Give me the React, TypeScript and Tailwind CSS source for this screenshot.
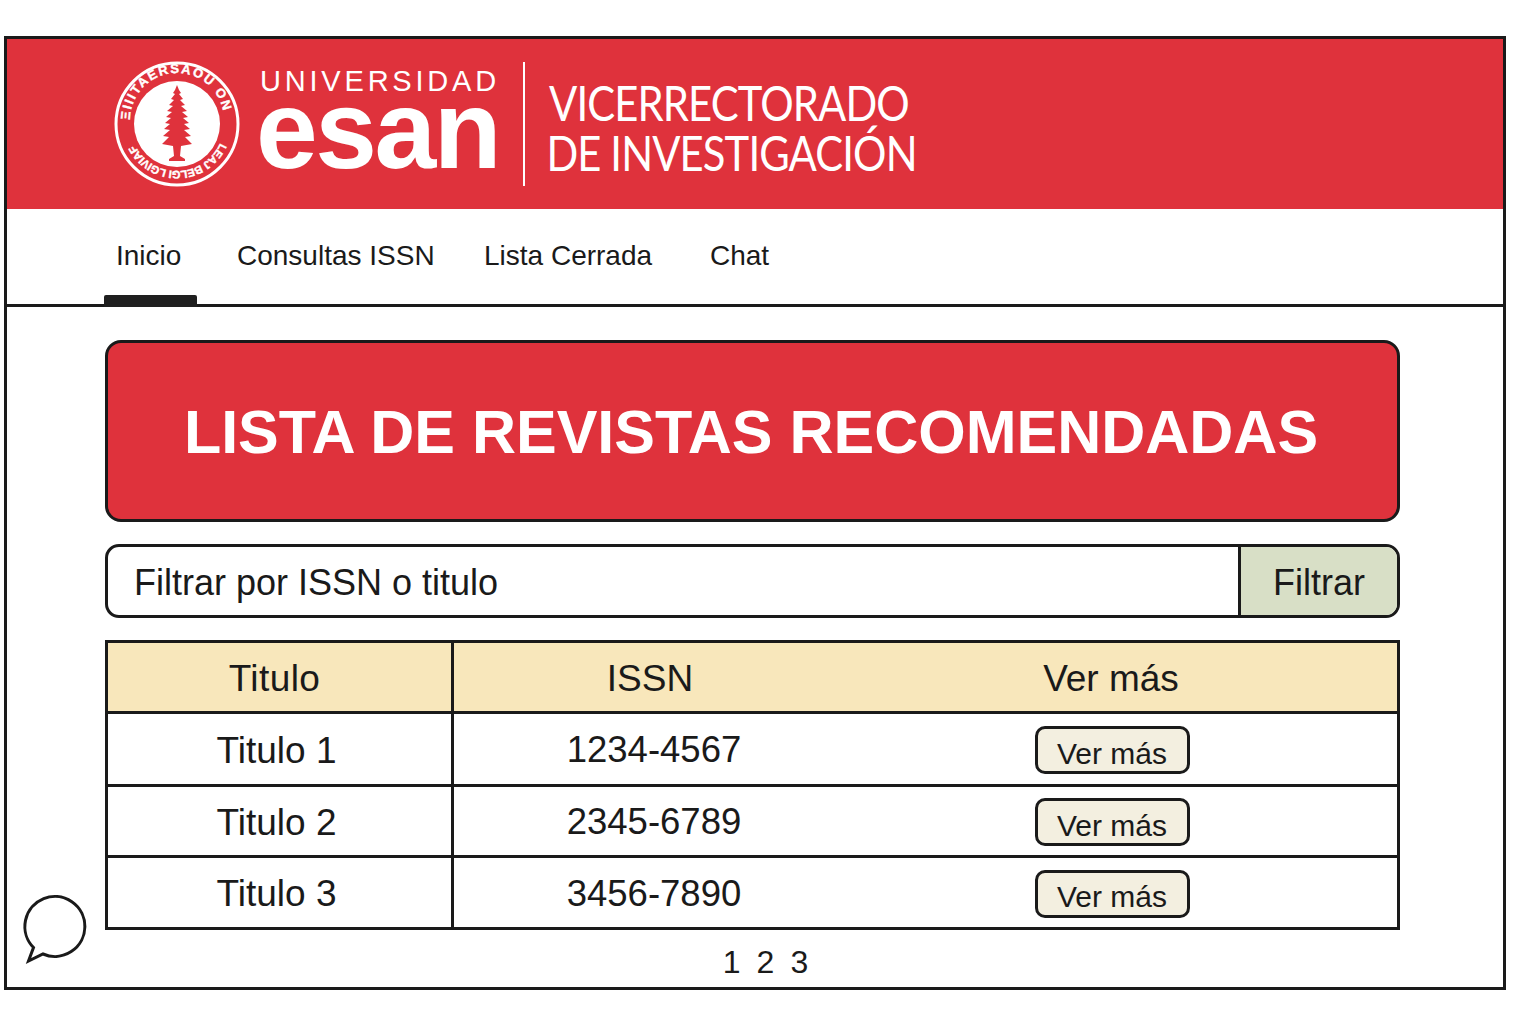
import React from 'react';

const rows = [
  { titulo: 'Titulo 1', issn: '1234-4567', height: 'h-[73px]', line: true },
  { titulo: 'Titulo 2', issn: '2345-6789', height: 'h-[71px]', line: true },
  { titulo: 'Titulo 3', issn: '3456-7890', height: 'h-[69px]', line: false },
];

const navItems = [
  { label: 'Inicio', className: 'w-[121px] pl-[12px]', active: true },
  { label: 'Consultas ISSN', className: 'w-[247px] pl-[12px]' },
  { label: 'Lista Cerrada', className: 'w-[226px] pl-[12px]' },
  { label: 'Chat', className: 'w-[100px] pl-[12px]' },
];

// half widths of the tree's tiers, top to bottom: [y at tip of branch, half width, y back at the trunk side, half width]
const tiers = [
  [33, 4, 34, 2],
  [39, 6, 40, 3],
  [45, 8, 46, 4],
  [51, 10, 52, 5],
  [57, 11, 58, 6],
  [63, 12, 64, 7],
  [69, 13, 70, 7],
  [76, 14, 77, 8],
  [84, 15, 86, 4],
];

const right = tiers.map(([y1, w1, y2, w2]) => `L${64 + w1} ${y1} L${64 + w2} ${y2}`).join(' ');
const left = [...tiers].reverse().map(([y1, w1, y2, w2]) => `L${64 - w2} ${y2} L${64 - w1} ${y1}`).join(' ');
const treePath = `M64 25 L66 30 ${right} L67 96 L72 99 L72 101 L56 101 L56 99 L61 96 ${left} L62 30 Z`;

const Seal = () => (
  <svg width="128" height="128" viewBox="0 0 128 128" className="shrink-0">
    <defs>
      <path id="sealTop" d="M 17 60 A 47 47 0 0 1 111 60" />
      <path id="sealBottom" d="M 107 83 A 47 47 0 0 1 21 83" />
    </defs>
    <circle cx="64" cy="64" r="61" fill="none" stroke="#fff" strokeWidth="3" />
    <circle cx="64" cy="64" r="43" fill="#fff" />
    <text fill="#fff" stroke="#fff" strokeWidth="0.4" fontFamily="Liberation Sans, sans-serif" fontWeight="700" fontSize="13">
      <textPath href="#sealTop" textLength="138">ΞIIITAERSAOU ON</textPath>
    </text>
    <text fill="#fff" stroke="#fff" strokeWidth="0.4" fontFamily="Liberation Sans, sans-serif" fontWeight="700" fontSize="11">
      <textPath href="#sealBottom" textLength="106">LEAJ BELGI LGIVIAF</textPath>
    </text>
    <path fill="#df323c" d={treePath} />
  </svg>
);

const ChatBubble = () => (
  <svg width="72" height="74" viewBox="0 0 72 74" className="absolute left-[12px] top-[853px]" fill="none">
    <path
      d="M14.5 55.5 A30 30 0 1 1 24 62 L9.5 69 Z"
      stroke="#1a1a1a"
      strokeWidth="3"
    />
  </svg>
);

export default function App() {
  return (
    <div className="w-[1536px] h-[1024px] bg-white pt-[36px] pl-[4px] font-['Liberation_Sans',Arial,sans-serif] text-[#1a1a1a] overflow-hidden">
      <div className="relative w-[1502px] h-[954px] border-[3px] border-[#1a1a1a]">
        <header className="h-[170px] bg-[#df323c] flex items-center pl-[106px] text-white">
          <Seal />
          <div className="ml-[15px] w-[241px] flex flex-col h-[128px] pt-[2px]">
            <div className="text-[29px] leading-[38px] tracking-[3.8px] pl-[4px] whitespace-nowrap">UNIVERSIDAD</div>
            <div className="text-[111px] leading-[60px] font-bold tracking-[-2.5px] whitespace-nowrap">esan</div>
          </div>
          <div className="ml-[26px] w-[2px] h-[124px] bg-white" />
          <div className="ml-[24px] text-[48px] leading-[50px] tracking-[-1px] whitespace-nowrap font-['Lato',sans-serif] pt-[8px] scale-x-[0.87] origin-left">
            <div>VICERRECTORADO</div>
            <div className="-ml-[3px]">DE INVESTIGACIÓN</div>
          </div>
        </header>

        <nav className="h-[98px] border-b-[3px] border-[#1a1a1a] flex pl-[97px] text-[28px]">
          {navItems.map((item) => (
            <div key={item.label} className={`relative h-full pt-[28px] leading-[38px] whitespace-nowrap ${item.className}`}>
              {item.label}
              {item.active && (
                <div className="absolute left-0 bottom-[-3px] w-[93px] h-[12px] bg-[#1f1f1f] rounded-t-[2px]" />
              )}
            </div>
          ))}
        </nav>

        <main className="pl-[98px] pt-[33px] w-[1393px]">
          <div className="h-[182px] rounded-[16px] border-[3px] border-[#1a1a1a] bg-[#df323c] flex items-center justify-center text-white text-[61px] font-bold pt-[3px] pr-[3px]">
            LISTA DE REVISTAS RECOMENDADAS
          </div>

          <div className="mt-[22px] h-[74px] rounded-[14px] border-[3px] border-[#1a1a1a] flex overflow-hidden text-[36px]">
            <div className="flex-1 flex items-center pl-[26px] pt-[4px]">Filtrar por ISSN o titulo</div>
            <div className="w-[159px] border-l-[3px] border-[#1a1a1a] bg-[#d8dfc6] flex items-center justify-center pt-[4px]">Filtrar</div>
          </div>

          <div className="mt-[22px] border-[3px] border-[#1a1a1a] text-[37px]">
            <div className="h-[71px] bg-[#f8e7bb] grid grid-cols-[346px_392px_1fr] border-b-[3px] border-[#1a1a1a] items-stretch">
              <div className="border-r-[3px] border-[#1a1a1a] flex items-center justify-center pr-[10px] pt-[4px] tracking-[0.4px]">Titulo</div>
              <div className="flex items-center justify-center pt-[4px]">ISSN</div>
              <div className="flex items-center justify-center pr-[21px] pt-[4px]">Ver más</div>
            </div>
            {rows.map((row) => (
              <div
                key={row.titulo}
                className={`${row.height} grid grid-cols-[346px_392px_1fr] items-stretch ${row.line ? 'border-b-[3px] border-[#1a1a1a]' : ''}`}
              >
                <div className="border-r-[3px] border-[#1a1a1a] flex items-center justify-center pr-[6px] pt-[3px]">{row.titulo}</div>
                <div className="flex items-center justify-center pl-[8px] pt-[3px] text-[36.5px]">{row.issn}</div>
                <div className="flex items-center justify-center pr-[19px] pt-[2px]">
                  <button className="w-[155px] h-[48px] rounded-[10px] border-[3px] border-[#1a1a1a] bg-[#f3efe0] text-[30px] leading-none pt-[7px]">
                    Ver más
                  </button>
                </div>
              </div>
            ))}
          </div>

          <div className="mt-[13px] flex justify-center gap-[16px] text-[32px] leading-[38px] pl-[26px] w-[1295px]">
            <span>1</span>
            <span>2</span>
            <span>3</span>
          </div>
        </main>

        <ChatBubble />
      </div>
    </div>
  );
}
